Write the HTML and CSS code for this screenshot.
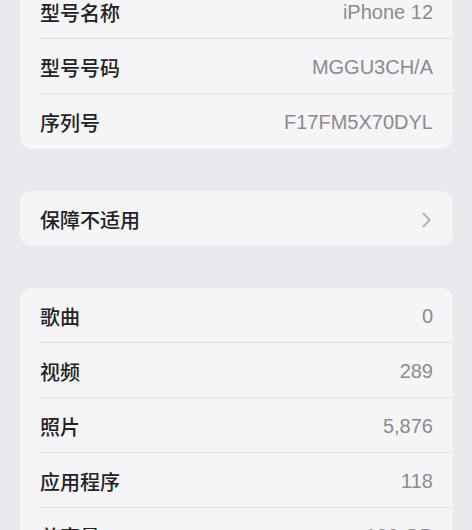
FILE: index.html
```html
<!DOCTYPE html>
<html lang="zh-CN">
<head>
<meta charset="utf-8">
<title>关于本机</title>
<link rel="stylesheet" href="styles.css">
</head>
<body>
<main class="page">
  <section class="card card-first">
    <div class="row"><div class="row-inner"><span class="label">型号名称</span><span class="value">iPhone 12</span></div></div>
    <div class="row"><div class="row-inner"><span class="label">型号号码</span><span class="value">MGGU3CH/A</span></div></div>
    <div class="row"><div class="row-inner"><span class="label">序列号</span><span class="value">F17FM5X70DYL</span></div></div>
  </section>

  <section class="card">
    <div class="row"><div class="row-inner"><span class="label">保障不适用</span>
      <svg class="chevron" width="9" height="16" viewBox="0 0 9 16" aria-hidden="true"><path d="M1.5 1.5 L7.5 8 L1.5 14.5" fill="none" stroke="#b4b4b8" stroke-width="2" stroke-linecap="round" stroke-linejoin="round"/></svg>
    </div></div>
  </section>

  <section class="card">
    <div class="row"><div class="row-inner"><span class="label">歌曲</span><span class="value">0</span></div></div>
    <div class="row"><div class="row-inner"><span class="label">视频</span><span class="value">289</span></div></div>
    <div class="row"><div class="row-inner"><span class="label">照片</span><span class="value">5,876</span></div></div>
    <div class="row"><div class="row-inner"><span class="label">应用程序</span><span class="value">118</span></div></div>
    <div class="row"><div class="row-inner"><span class="label">总容量</span><span class="value">128 GB</span></div></div>
  </section>
</main>
</body>
</html>
```

FILE: styles.css
```css
html, body {
  margin: 0;
  padding: 0;
  background: #e9e8ed;
  height: 100%;
  overflow: hidden;
}

.page {
  padding: 0 19px 0 20px;
  display: flex;
  flex-direction: column;
  gap: 42px;
  font-family: "Liberation Sans", "Noto Sans CJK SC", sans-serif;
  font-size: 20px;
}

.card {
  background: #f5f5f7;
  border-radius: 12px;
  overflow: hidden;
}

.card-first {
  margin-top: -16px;
}

.row {
  padding-left: 20px;
  height: 55px;
  box-sizing: border-box;
}

.row-inner {
  height: 100%;
  box-sizing: border-box;
  display: flex;
  align-items: center;
  justify-content: space-between;
  padding-right: 20px;
  padding-top: 2px;
  border-bottom: 1px solid #e2e2e5;
}

.row:last-child .row-inner {
  border-bottom: none;
}

.label {
  font-family: "Noto Sans CJK SC", sans-serif;
  font-weight: 500;
  color: #232325;
  font-size: 20px;
}

.value {
  color: #8b8b90;
}

.chevron {
  margin-right: 2px;
  display: block;
}
```
